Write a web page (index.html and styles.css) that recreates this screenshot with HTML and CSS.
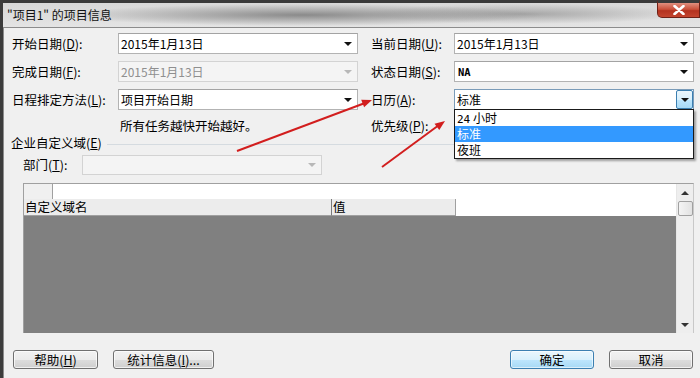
FILE: index.html
```html
<!DOCTYPE html>
<html lang="zh-CN">
<head>
<meta charset="utf-8">
<title>项目信息</title>
<link rel="stylesheet" href="styles.css">
</head>
<body>
<div class="window">
  <div class="titlebar">
    <span class="title">"项目1" 的项目信息</span>
    <div class="close"><svg width="12" height="10" viewBox="0 0 12 10"><path d="M1.5 1 L10.5 9 M10.5 1 L1.5 9" stroke="#fff" stroke-width="2.6" stroke-linecap="round"/></svg></div>
  </div>
  <div class="client">
    <div class="form">
      <label class="lbl">开始日期(<u>D</u>):</label>
      <div class="combo"><span class="val">2015年1月13日</span><i class="arr"></i></div>
      <span></span>
      <label class="lbl">当前日期(<u>U</u>):</label>
      <div class="combo"><span class="val">2015年1月13日</span><i class="arr"></i></div>

      <label class="lbl">完成日期(<u>F</u>):</label>
      <div class="combo disabled"><span class="val">2015年1月13日</span><i class="arr"></i></div>
      <span></span>
      <label class="lbl">状态日期(<u>S</u>):</label>
      <div class="combo"><span class="val mono">NA</span><i class="arr"></i></div>

      <label class="lbl">日程排定方法(<u>L</u>):</label>
      <div class="combo"><span class="val">项目开始日期</span><i class="arr"></i></div>
      <span></span>
      <label class="lbl">日历(<u>A</u>):</label>
      <div class="combo focused">
        <span class="val">标准</span>
        <span class="arrbtn"><i class="arr"></i></span>
        <ul class="dropdown">
          <li><span class="mono2">24</span> 小时</li>
          <li class="sel">标准</li>
          <li>夜班</li>
        </ul>
      </div>

      <span></span>
      <span class="note">所有任务越快开始越好。</span>
      <span></span>
      <label class="lbl">优先级(<u>P</u>):</label>
      <span></span>
    </div>

    <div class="group-head">
      <span class="group-title">企业自定义域(<u>E</u>)</span>
      <span class="group-line"></span>
    </div>

    <div class="dept">
      <label class="lbl dept-lbl">部门(<u>T</u>):</label>
      <div class="combo disabled dept-combo"><span class="val"></span><i class="arr"></i></div>
    </div>

    <div class="grid">
      <div class="grid-main">
        <div class="grid-top"><span class="corner"></span><span class="top-fill"></span></div>
        <div class="grid-head">
          <span class="hcell name">自定义域名</span>
          <span class="hcell value">值</span>
          <span class="hfill"></span>
        </div>
        <div class="grid-body"></div>
      </div>
      <div class="vscroll">
        <span class="sarrow up"></span>
        <span class="thumb"></span>
        <span class="strack"></span>
        <span class="sarrow down"></span>
      </div>
    </div>

    <div class="buttons">
      <button class="btn help">帮助(<u>H</u>)</button>
      <button class="btn stats">统计信息(<u>I</u>)...</button>
      <button class="btn ok default">确定</button>
      <button class="btn cancel">取消</button>
    </div>
  </div>

  <svg class="arrows" width="700" height="378" viewBox="0 0 700 378">
    <line x1="237" y1="151" x2="365" y2="103" stroke="#d21e1e" stroke-width="2"/>
    <polygon points="372,100 364.1,107.3 361.2,99.8" fill="#d21e1e"/>
    <line x1="382" y1="167" x2="439" y2="125" stroke="#d21e1e" stroke-width="2"/>
    <polygon points="445,121 439.3,130.1 434.5,123.7" fill="#d21e1e"/>
  </svg>
</div>
</body>
</html>
```

FILE: styles.css
```css
* { box-sizing: border-box; }

html, body {
  margin: 0;
  padding: 0;
}

body {
  width: 700px;
  height: 378px;
  overflow: hidden;
  background: #f0f0f0;
  font-family: "Noto Sans CJK SC", "Noto Sans", sans-serif;
  font-size: 12.5px;
  color: #000;
}

u { text-decoration: underline; text-underline-offset: 1px; }

.window {
  position: relative;
  height: 378px;
  border-left: 3px solid #3c3c3c;
  display: flex;
  flex-direction: column;
}

.titlebar {
  height: 27px;
  flex: none;
  display: flex;
  align-items: flex-start;
  justify-content: space-between;
  background:
    linear-gradient(to bottom, #3a3a3a 0, #3a3a3a 3px, rgba(0,0,0,0) 3px),
    radial-gradient(ellipse 240px 11px at 300px 15px, rgba(110,110,110,0.75), rgba(110,110,110,0)),
    radial-gradient(ellipse 160px 10px at 520px 14px, rgba(120,120,120,0.55), rgba(120,120,120,0)),
    linear-gradient(to bottom, #d6d6d6, #e4e4e4);
}

.title {
  padding-left: 4px;
  padding-top: 4px;
  line-height: 22px;
  font-size: 12px;
  color: #111;
}

.close {
  width: 43px;
  height: 18px;
  margin-top: 0;
  border: 1px solid #6e2016;
  border-top: 3px solid #3a3a3a;
  border-radius: 0 0 0 5px;
  background: linear-gradient(to bottom, #e0907f 0, #c9503a 45%, #b4321f 55%, #c4452f 100%);
  display: flex;
  align-items: center;
  justify-content: center;
}

.client {
  flex: 1;
  border-top: 1px solid #8c8c8c;
  border-left: 1px solid #8c8c8c;
  background: #f0f0f0;
  display: flex;
  flex-direction: column;
}

.form {
  display: grid;
  grid-template-columns: 106px 240px 13px 83px 240px;
  grid-template-rows: 21px 21px 21px 18px;
  row-gap: 7px;
  padding: 5px 0 0 8px;
  align-items: center;
}

.lbl {
  white-space: nowrap;
  line-height: 16px;
}

.combo {
  position: relative;
  height: 100%;
  border: 1px solid #b3b3b3;
  border-top-color: #a3a3a3;
  background: #fff;
  display: flex;
  align-items: center;
  padding-left: 2px;
}

.val {
  flex: 1;
  font-size: 12px;
  line-height: 16px;
  white-space: nowrap;
}

.mono {
  font-family: "DejaVu Sans Mono", monospace;
  font-weight: bold;
  font-size: 10.5px;
  padding-left: 1px;
}

.mono2 {
  font-family: "DejaVu Sans Mono", monospace;
  font-size: 11px;
}

.arr {
  width: 0;
  height: 0;
  margin-right: 5px;
  border-left: 4px solid transparent;
  border-right: 4px solid transparent;
  border-top: 4px solid #111;
}

.combo.disabled {
  background: #f4f4f4;
  border-color: #d3d3d3;
  color: #8f8f8f;
}

.combo.disabled .arr { border-top-color: #b8b8b8; }

.combo.focused {
  border-color: #7a9bb8;
  padding-right: 0;
}

.arrbtn {
  width: 17px;
  height: 19px;
  margin-right: 0;
  border: 1px solid #3c7fb1;
  border-radius: 2px;
  background: linear-gradient(to bottom, #eaf6fd 0, #d9f0fc 50%, #bee6fd 51%, #a7d9f5 100%);
  display: flex;
  align-items: center;
  justify-content: center;
}

.arrbtn .arr { margin-right: 0; }

.dropdown {
  position: absolute;
  top: 19px;
  left: -1px;
  right: -1px;
  margin: 0;
  padding: 0;
  list-style: none;
  background: #fff;
  border: 1px solid #1a1a1a;
  box-shadow: 2px 2px 2px rgba(0,0,0,0.35);
  z-index: 5;
}

.dropdown li {
  height: 16px;
  line-height: 16px;
  padding-left: 2px;
  font-size: 12px;
}

.dropdown li.sel {
  background: #3399ff;
  color: #fff;
}

.note {
  padding-left: 2px;
  line-height: 16px;
}

.group-head {
  display: flex;
  align-items: center;
  height: 14px;
  margin-top: 1px;
  padding-left: 7px;
}

.group-title {
  line-height: 14px;
  white-space: nowrap;
}

.group-line {
  flex: 1;
  height: 1px;
  margin: 3px 6px 0 5px;
  background: #d5dbe0;
}

.dept {
  display: flex;
  align-items: center;
  height: 20px;
  margin-top: 5px;
  padding-left: 19px;
}

.dept-lbl { width: 59px; }

.dept-combo {
  width: 240px;
  height: 20px;
}

.grid {
  display: flex;
  height: 150px;
  margin: 8px 6px 0 19px;
  border-top: 1px solid #a0a0a0;
  border-left: 1px solid #a0a0a0;
  border-right: 1px solid #c8c8c8;
  background: #fff;
}

.grid-main {
  flex: 1;
  display: flex;
  flex-direction: column;
}

.grid-top {
  height: 15px;
  display: flex;
}

.corner {
  width: 29px;
  background: #f0f0f0;
  border-right: 1px solid #a0a0a0;
}

.top-fill { flex: 1; background: #fff; }

.grid-head {
  height: 17px;
  display: flex;
  background: #fff;
}

.hcell {
  background: #ececec;
  border-bottom: 1px solid #a0a0a0;
  font-size: 12.5px;
  line-height: 16px;
  white-space: nowrap;
  padding-left: 1px;
}

.hcell.name {
  width: 308px;
  border-right: 1px solid #7a7a7a;
}

.hcell.value {
  width: 124px;
  border-right: 1px solid #a0a0a0;
}

.hfill { flex: 1; }

.grid-body {
  flex: 1;
  background: #808080;
}

.vscroll {
  width: 17px;
  display: flex;
  flex-direction: column;
  align-items: center;
  background: #eeeeee;
  border-left: 1px solid #e6e6e6;
}

.sarrow {
  height: 17px;
  width: 100%;
  display: flex;
  justify-content: center;
  align-items: center;
}

.sarrow.up::after {
  content: "";
  border-left: 4px solid transparent;
  border-right: 4px solid transparent;
  border-bottom: 4px solid #333;
}

.sarrow.down::after {
  content: "";
  border-left: 4px solid transparent;
  border-right: 4px solid transparent;
  border-top: 4px solid #333;
}

.thumb {
  width: 15px;
  height: 15px;
  border: 1px solid #a0a0a0;
  border-radius: 2px;
  background: linear-gradient(to right, #f4f4f4, #e2e2e2);
}

.strack { flex: 1; }

.buttons {
  display: flex;
  align-items: center;
  margin-top: 17px;
  padding: 0 7px 0 9px;
}

.btn {
  height: 19px;
  padding: 0;
  font-family: "Noto Sans CJK SC", "Noto Sans", sans-serif;
  font-size: 12.5px;
  line-height: 15px;
  color: #000;
  border: 1px solid #707070;
  border-radius: 3px;
  background: linear-gradient(to bottom, #f2f2f2 0, #ebebeb 50%, #dddddd 51%, #cfcfcf 100%);
  box-shadow: inset 0 0 0 1px rgba(255,255,255,0.7);
}

.btn.help { width: 85px; }
.btn.stats { width: 101px; margin-left: 15px; }
.btn.ok { width: 84px; margin-left: auto; }
.btn.cancel { width: 84px; margin-left: 15px; }

.btn.default {
  border-color: #3c7fb1;
  background: linear-gradient(to bottom, #eaf6fd 0, #d9f0fc 50%, #bee6fd 51%, #a7d9f5 100%);
  box-shadow: inset 0 0 0 1px rgba(255,255,255,0.6);
}

.arrows {
  position: absolute;
  left: -3px;
  top: 0;
  pointer-events: none;
  z-index: 10;
}
```
